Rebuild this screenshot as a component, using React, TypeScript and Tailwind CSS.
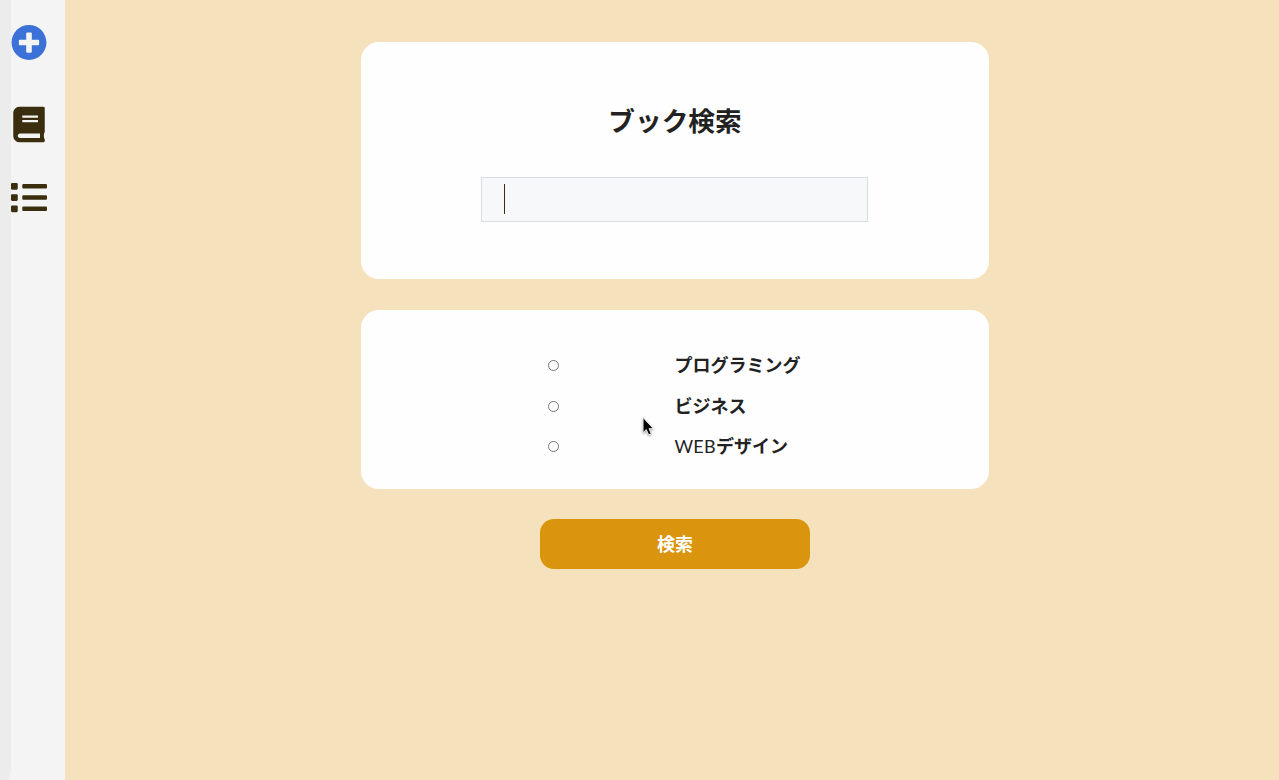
import React from "react";
import { FaPlusCircle, FaBook, FaList } from "react-icons/fa";

const categories = [
  { latin: "", label: "プログラミング", height: "h-[41px]", pad: "pb-[4px]" },
  { latin: "", label: "ビジネス", height: "h-[40px]", pad: "pb-[2px]" },
  { latin: "WEB", label: "デザイン", height: "h-[41px]", pad: "pb-[3px]" },
];

function Sidebar() {
  return (
    <nav className="flex w-[65px] shrink-0 bg-[#f4f4f4]">
      <div className="flex w-[11px] shrink-0 flex-col">
        <div className="grow bg-[#ececec]" />
        <svg className="block h-[10px] w-[11px]" viewBox="0 0 11 10" fill="#ececec">
          <path d="M0 0H10.5L10 5L8 10H0Z" />
        </svg>
      </div>
      <div className="flex w-9 translate-y-[0.5px] flex-col items-center pt-6 text-[36px] text-[#3a2e0e]">
        <FaPlusCircle className="shrink-0 text-[#3c71d7]" />
        <FaBook className="mt-[46px] shrink-0" />
        <FaList className="mt-[37px] shrink-0" />
      </div>
    </nav>
  );
}

function Pointer() {
  return (
    <svg
      className="pointer-events-none absolute left-[639px] top-[414px] h-[26px] w-[20px] drop-shadow-[0_1px_1px_rgba(0,0,0,0.4)]"
      viewBox="0 0 18 24"
    >
      <path
        d="M3.5 3.2V17.2L6.5 14.4L8.7 19.2L11.1 18.2L9 13.5H13Z"
        fill="#000"
        stroke="#fff"
        strokeWidth="0.8"
      />
    </svg>
  );
}

export default function App() {
  return (
    <div className="relative flex h-screen min-h-[780px] overflow-hidden bg-[#f5e1bc] font-['Noto_Sans_CJK_JP',sans-serif] text-[#222]">
      <Sidebar />
      <main className="flex grow flex-col items-center pl-[6px] pt-[42px]">
        <section className="flex h-[237px] w-[628px] flex-col items-center rounded-[18px] bg-[#fefefe] pt-[57px]">
          <h1 className="h-[42px] text-[26.7px] font-bold leading-[42px]">ブック検索</h1>
          <div className="mr-px mt-[36px] flex h-[45px] w-[387px] items-start border border-[#d5dee1] bg-[#f6f8fa] pl-[22px] pt-[6px]">
            <span className="h-[30px] w-px bg-[#3a2e0e]" />
          </div>
        </section>
        <section className="mt-[31px] h-[179px] w-[628px] rounded-[18px] bg-[#fefefe] pt-[35px]">
          {categories.map((c) => (
            <label key={c.label} className={`flex items-center pl-[187px] ${c.height}`}>
              <input
                type="radio"
                name="category"
                className="m-0 h-[11px] w-[11px] shrink-0 appearance-none rounded-full border border-[#777] bg-white"
              />
              <span className={`ml-[115.5px] flex items-center text-[18px] leading-[26px] ${c.pad}`}>
                {c.latin && (
                  <span className="w-[41.5px] whitespace-nowrap pt-[2px] font-['Lato','Noto_Sans_CJK_JP',sans-serif] text-[18px] leading-[26px] tracking-[0.2px]">
                    {c.latin}
                  </span>
                )}
                <span className="font-bold">{c.label}</span>
              </span>
            </label>
          ))}
        </section>
        <button className="mt-[30px] h-[50px] w-[270px] rounded-[14px] bg-[#da940e] pb-[2px] text-[18px] font-bold text-white">
          検索
        </button>
      </main>
      <Pointer />
    </div>
  );
}
